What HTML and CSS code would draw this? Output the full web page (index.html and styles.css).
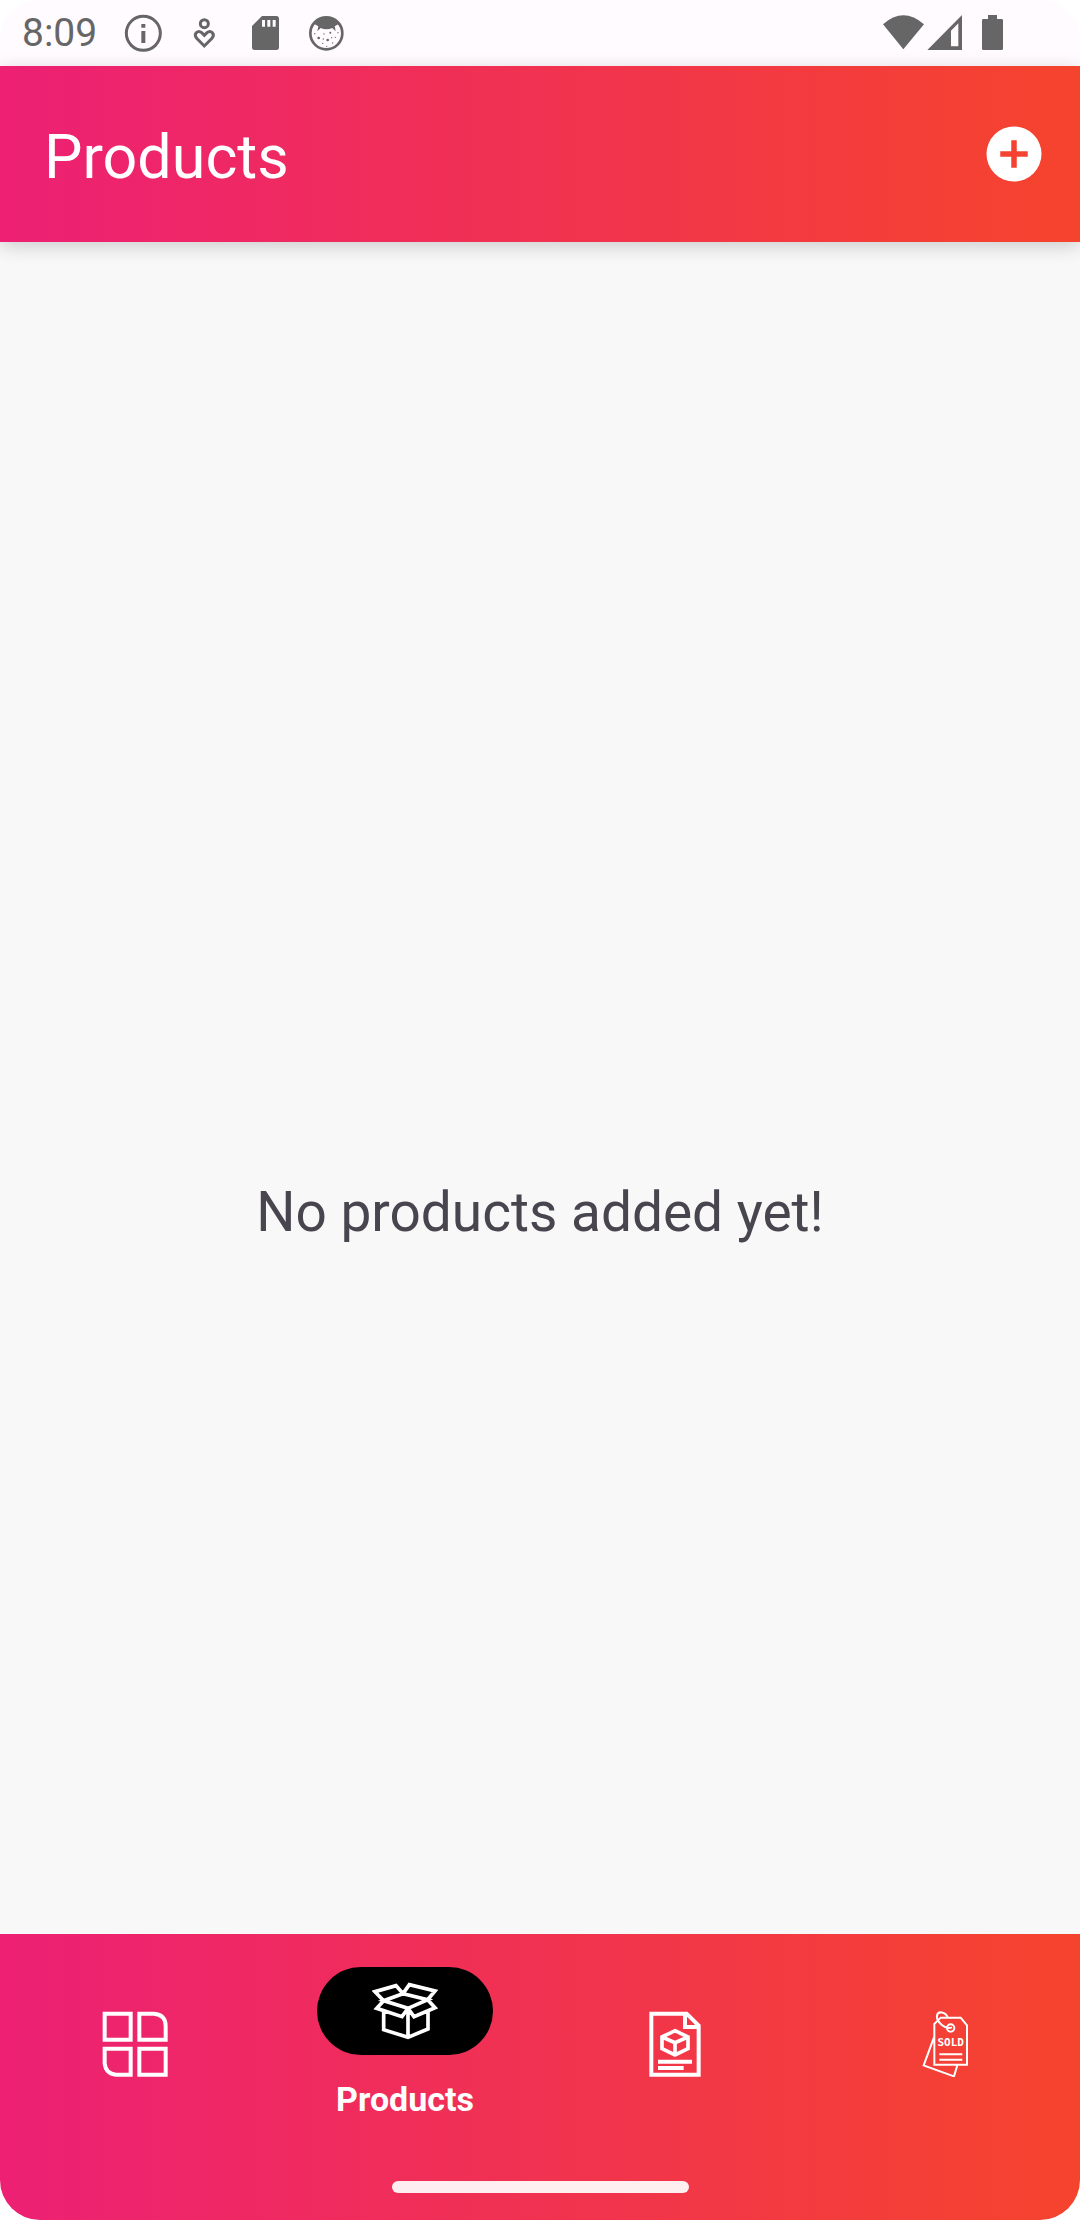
FILE: index.html
```html
<!DOCTYPE html>
<html lang="en">
<head>
<meta charset="utf-8">
<meta name="viewport" content="width=device-width, initial-scale=1">
<title>Products</title>
<link rel="stylesheet" href="styles.css">
</head>
<body>
<div class="app">
  <div class="status-bar">
    <div class="status-group">
      <time class="clock">8:09</time>
      <svg class="status-icon" viewBox="372 39 120 120" aria-hidden="true">
        <circle cx="430" cy="100" r="51" fill="none" stroke="currentColor" stroke-width="9"/>
        <path fill="currentColor" d="M424 72h12v11h-12zM424 93h12v36h-12z"/>
      </svg>
      <svg class="status-icon" viewBox="552 39 120 120" aria-hidden="true">
        <g fill="none" stroke="currentColor" stroke-width="9">
          <circle cx="613" cy="71" r="12"/>
          <path d="M613 138L590 115C579 101 594 89 605 98L613 106L621 98C632 89 647 101 636 115Z"/>
        </g>
      </svg>
      <svg class="status-icon" viewBox="732 39 120 120" aria-hidden="true">
        <path fill="currentColor" fill-rule="evenodd" d="M786 48H829Q837 48 837 56V142Q837 150 829 150H764Q756 150 756 142V78ZM786 60V80H795V60ZM802 60V80H811V60ZM818 60V80H827V60Z"/>
      </svg>
      <svg class="status-icon" viewBox="912 39 120 120" aria-hidden="true">
        <circle cx="979" cy="100" r="48" fill="none" stroke="currentColor" stroke-width="8"/>
        <path fill="currentColor" d="M943 72Q979 32 1016 72L1004 79L1007 94L997 84Q979 92 962 84L952 94L955 79Z"/>
        <g fill="currentColor">
          <circle cx="956" cy="114" r="4"/><circle cx="991" cy="98" r="3"/><circle cx="983" cy="120" r="4"/>
          <circle cx="972" cy="102" r="2"/><circle cx="1006" cy="112" r="2"/><circle cx="968" cy="130" r="2"/>
          <circle cx="998" cy="129" r="2"/><circle cx="944" cy="101" r="2"/><circle cx="980" cy="139" r="2"/>
          <circle cx="1014" cy="98" r="2"/><circle cx="970" cy="117" r="2"/><circle cx="995" cy="113" r="2"/>
        </g>
      </svg>
    </div>
    <div class="status-group status-system">
      <svg class="status-icon status-wifi" viewBox="126 39 132 120" aria-hidden="true">
        <path fill="currentColor" d="M129 73Q190 19 252 73L190 148Z"/>
      </svg>
      <svg class="status-icon" viewBox="258 39 120 120" aria-hidden="true">
        <path fill="currentColor" fill-rule="evenodd" d="M366 45V150H262ZM355 70L333 92V139H355Z"/>
      </svg>
      <svg class="status-icon status-battery" viewBox="399 39 120 120" aria-hidden="true">
        <path fill="currentColor" d="M444 45H471V57H485Q489 57 489 61V146Q489 150 485 150H430Q426 150 426 146V61Q426 57 430 57H444Z"/>
      </svg>
    </div>
  </div>

  <header class="app-header">
    <h1 class="title">Products</h1>
    <button class="add-button" type="button" aria-label="Add product">
      <svg class="icon" viewBox="0 0 24 24" aria-hidden="true">
        <path fill="currentColor" d="M12 2a10 10 0 1 0 0 20 10 10 0 0 0 0-20zm5 11h-4v4h-2v-4H7v-2h4V7h2v4h4z"/>
      </svg>
    </button>
  </header>

  <main class="content">
    <p class="empty">No products added yet!</p>
  </main>

  <nav class="bottom-nav" aria-label="Main">
    <div class="nav-items">
      <a class="nav-item" href="#dashboard" aria-label="Dashboard">
        <svg class="icon" viewBox="66 93 198 198" aria-hidden="true">
          <g fill="none" stroke="currentColor" stroke-width="12">
            <path d="M74 101H152V179H74ZM178 101H222Q257 104 257 138V179H178ZM74 206H152V284H108Q77 281 74 250ZM178 206H257V284H178Z"/>
          </g>
        </svg>
      </a>
      <a class="nav-item" href="#products" aria-current="page">
        <span class="pill">
          <svg class="icon" viewBox="216 114 198 198" aria-hidden="true">
            <g fill="none" stroke="currentColor" stroke-width="11">
              <path d="M251 182L225 155L288 137L309 161ZM309 161L328 134L405 153L383 179ZM251 182L324 205L383 179L309 161ZM251 182L230 205L306 230L324 205ZM324 205L342 230L405 203L383 179M251 215V269L324 292L384 267V215M324 205V292"/>
            </g>
          </svg>
        </span>
        <span class="nav-label">Products</span>
      </a>
      <a class="nav-item" href="#orders" aria-label="Orders">
        <svg class="icon" viewBox="66 93 198 198" aria-hidden="true">
          <g fill="none" stroke="currentColor" stroke-width="12">
            <path d="M94 101H200L236 137V284H94ZM195 101V141H236"/>
            <path stroke-width="11" d="M165 152L204 171V206L165 225L126 206V171ZM126 171L165 188L204 171M165 188V225"/>
            <path d="M114 245H216M114 264H191"/>
          </g>
        </svg>
      </a>
      <a class="nav-item" href="#sales" aria-label="Sales">
        <svg class="icon" viewBox="36 63 198 198" aria-hidden="true">
          <g fill="none" stroke="currentColor" stroke-width="6">
            <path d="M103 102L122 83H182L201 106V224H103ZM103 139L71 226L162 259L172 226"/>
            <circle cx="152" cy="114" r="11"/>
            <path d="M156 112C135 121 108 94 111 77C114 61 137 66 143 82"/>
            <path d="M118 193H187M118 209H187"/>
          </g>
          <text class="sold-text" x="152" y="169" text-anchor="middle">SOLD</text>
        </svg>
      </a>
    </div>
    <div class="home-indicator"></div>
  </nav>
</div>
</body>
</html>
```
FILE: styles.css
```css
* {
  box-sizing: border-box;
}

body {
  margin: 0;
  background: #fff;
  font-family: Roboto, "Noto Sans", sans-serif;
}

.app {
  display: flex;
  flex-direction: column;
  min-height: 100vh;
  overflow: hidden;
  border-radius: 40px;
  background: #f8f8f8;
}

.status-bar {
  display: flex;
  align-items: center;
  justify-content: space-between;
  height: 66px;
  padding: 0 67px 0 22px;
  background: #fffbff;
  color: #666;
}

.status-group {
  display: flex;
  align-items: center;
  gap: 20px;
}

.status-system {
  gap: 0;
}

.clock {
  min-width: 82px;
  font-size: 39px;
  line-height: 44px;
}

.status-icon {
  display: block;
  width: 40px;
  height: 40px;
}

.status-wifi {
  width: 44px;
}

.status-battery {
  margin-left: 7px;
}

.app-header {
  position: relative;
  display: flex;
  align-items: center;
  justify-content: space-between;
  height: 176px;
  padding: 0 33px 0 44px;
  background: linear-gradient(90deg, #ed2074, #f5442d);
  box-shadow: 0 4px 18px rgba(0, 0, 0, 0.18);
  color: #fff;
}

.title {
  margin: 0;
  padding-top: 6px;
  font-size: 61px;
  font-weight: 400;
  line-height: 72px;
}

.add-button {
  padding: 0;
  border: 0;
  background: none;
  color: #fff;
  cursor: pointer;
}

.icon {
  display: block;
  width: 66px;
  height: 66px;
}

.content {
  display: flex;
  flex: 1;
  align-items: center;
  justify-content: center;
  padding-top: 248px;
}

.empty {
  margin: 0;
  color: #49454f;
  font-size: 55px;
  line-height: 66px;
}

.bottom-nav {
  background: linear-gradient(90deg, #ed2074, #f5442d);
  color: #fff;
}

.nav-items {
  display: grid;
  grid-template-columns: repeat(4, 1fr);
  height: 220px;
}

.nav-item {
  display: flex;
  flex-direction: column;
  align-items: center;
  justify-content: center;
  gap: 22px;
  color: inherit;
  text-decoration: none;
}

.pill {
  display: flex;
  align-items: center;
  justify-content: center;
  width: 176px;
  height: 88px;
  border-radius: 44px;
  background: #000;
}

.nav-label {
  font-size: 34px;
  font-weight: 700;
  line-height: 44px;
}

.sold-text {
  fill: currentColor;
  font-family: "DejaVu Sans Mono", monospace;
  font-size: 33px;
  font-weight: 700;
}

.home-indicator {
  width: 297px;
  height: 12px;
  margin: 27px auto;
  border-radius: 6px;
  background: rgba(255, 255, 255, 0.92);
}
```
